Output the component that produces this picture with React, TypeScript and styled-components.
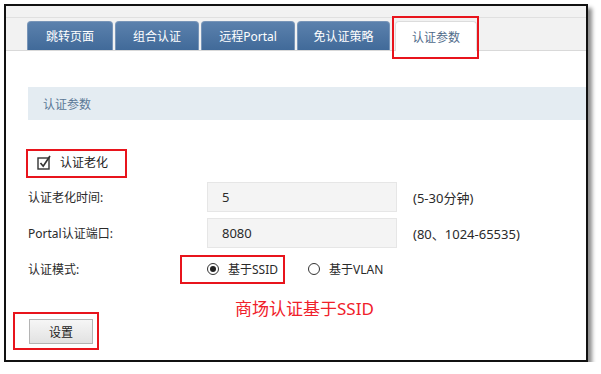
import styled, { createGlobalStyle, css } from "styled-components";

const GlobalStyle = createGlobalStyle`
  body {
    margin: 0;
    background: #ffffff;
    font-family: "Noto Sans", "Noto Sans CJK SC", sans-serif;
  }
`;

const redBox = (t: number, r: number, b: number, l: number) => css`
  position: relative;
  &::after {
    content: "";
    position: absolute;
    top: ${t}px;
    right: ${r}px;
    bottom: ${b}px;
    left: ${l}px;
    border: 2px solid #e8141c;
    pointer-events: none;
  }
`;

const Page = styled.div`
  padding: 4px 0 0 4px;
`;

const Frame = styled.div`
  width: 580px;
  height: 354px;
  border: 2px solid #111;
  box-shadow: 4px 4px 4px rgba(0, 0, 0, 0.45);
  background: #fff;
  overflow: hidden;
`;

const TabStrip = styled.div`
  background: #f2f2f2;
  border-bottom: 1px solid #d9d9d9;
`;

const TopLine = styled.div`
  height: 11px;
  border-bottom: 1px solid #e0e0e0;
`;

const TabRow = styled.div`
  display: flex;
  gap: 2px;
  padding: 3px 0 0 21px;
  height: 29px;
  align-items: flex-end;
`;

const Tab = styled.div<{ $w: number; $active?: boolean }>`
  width: ${(p) => p.$w}px;
  height: 29px;
  box-sizing: border-box;
  border-radius: 4px 4px 0 0;
  display: flex;
  align-items: center;
  justify-content: center;
  font-size: 12px;
  color: #fff;
  background: linear-gradient(#5b81ad, #416a99);
  border: 1px solid #7895b8;
  border-bottom: none;
  ${(p) =>
    p.$active &&
    css`
      margin-left: 3px;
      height: 30px;
      margin-bottom: -1px;
      background: #fff;
      color: #4f6b8a;
      border-color: #dcdcdc;
      ${redBox(-6, -3, -8, -4)}
    `}
`;

const Content = styled.div`
  padding: 36px 0 0 22px;
`;

const SectionBar = styled.div`
  height: 33px;
  background: #e4ecf2;
  display: flex;
  align-items: center;
  padding-left: 15px;
  font-size: 12px;
  color: #5b7896;
`;

const CheckRow = styled.label`
  display: flex;
  align-items: center;
  gap: 8px;
  width: fit-content;
  height: 26px;
  margin-top: 29px;
  padding-left: 9px;
  font-size: 12px;
  color: #222;
  ${redBox(0, -19, -3, -2)}
`;

const FormRow = styled.div<{ $first?: boolean }>`
  display: grid;
  grid-template-columns: 179px 190px auto;
  align-items: center;
  height: 36px;
  margin-top: ${(p) => (p.$first ? 4 : 0)}px;
`;

const Label = styled.span`
  font-size: 12px;
  color: #2a2a2a;
`;

const Input = styled.div`
  height: 30px;
  box-sizing: border-box;
  background: #f4f4f4;
  border: 1px solid #e6e6e6;
  display: flex;
  align-items: center;
  padding-left: 14px;
  font-size: 13px;
  color: #2a2a2a;
`;

const Hint = styled.span`
  padding-left: 16px;
  font-size: 13px;
  color: #2a2a2a;
`;

const RadioGroup = styled.div`
  display: flex;
  align-items: center;
  grid-column: 2 / 4;
`;

const RadioOption = styled.div<{ $marked?: boolean }>`
  display: flex;
  align-items: center;
  gap: 9px;
  font-size: 12px;
  color: #2a2a2a;
  margin-right: 30px;
  ${(p) => p.$marked && redBox(-5, -7, -6, -27)}
`;

const Radio = styled.span<{ $on?: boolean }>`
  width: 12px;
  height: 12px;
  box-sizing: border-box;
  border: 1.5px solid #333;
  border-radius: 50%;
  display: flex;
  align-items: center;
  justify-content: center;
  &::before {
    content: "";
    width: 6px;
    height: 6px;
    border-radius: 50%;
    background: ${(p) => (p.$on ? "#222" : "transparent")};
  }
`;

const Note = styled.div`
  margin: 12px 0 0 207px;
  line-height: 20px;
  font-size: 17px;
  color: #f0202a;
`;

const ButtonWrap = styled.div`
  padding-left: 1px;
`;

const Button = styled.button`
  width: 64px;
  height: 25px;
  background: linear-gradient(#f6f6f6, #e2e2e2);
  border: 1px solid #b4b4b4;
  font-family: inherit;
  font-size: 12px;
  color: #222;
  ${redBox(-8, -7, -7, -17)}
`;

const CheckIcon = () => (
  <svg width="15" height="15" viewBox="0 0 15 15">
    <rect x="1" y="3" width="11" height="11" fill="none" stroke="#333" strokeWidth="1.4" />
    <path d="M3.5 8 L6.2 11.2 L13 1" fill="none" stroke="#333" strokeWidth="1.7" />
  </svg>
);

const tabs = [
  { name: "跳转页面", w: 86 },
  { name: "组合认证", w: 84 },
  { name: "远程Portal", w: 94 },
  { name: "免认证策略", w: 93 },
];

const App = () => {
  return (
    <Page>
      <GlobalStyle />
      <Frame>
        <TabStrip>
          <TopLine />
          <TabRow>
            {tabs.map((t) => (
              <Tab key={t.name} $w={t.w}>
                {t.name}
              </Tab>
            ))}
            <Tab $w={82} $active>
              认证参数
            </Tab>
          </TabRow>
        </TabStrip>
        <Content>
          <SectionBar>认证参数</SectionBar>
          <CheckRow>
            <CheckIcon />
            认证老化
          </CheckRow>
          <FormRow $first>
            <Label>认证老化时间:</Label>
            <Input>5</Input>
            <Hint>(5-30分钟)</Hint>
          </FormRow>
          <FormRow>
            <Label>Portal认证端口:</Label>
            <Input>8080</Input>
            <Hint>(80、1024-65535)</Hint>
          </FormRow>
          <FormRow>
            <Label>认证模式:</Label>
            <RadioGroup>
              <RadioOption $marked>
                <Radio $on />
                基于SSID
              </RadioOption>
              <RadioOption>
                <Radio />
                基于VLAN
              </RadioOption>
            </RadioGroup>
          </FormRow>
          <Note>商场认证基于SSID</Note>
          <ButtonWrap>
            <Button>设置</Button>
          </ButtonWrap>
        </Content>
      </Frame>
    </Page>
  );
};

export default App;
